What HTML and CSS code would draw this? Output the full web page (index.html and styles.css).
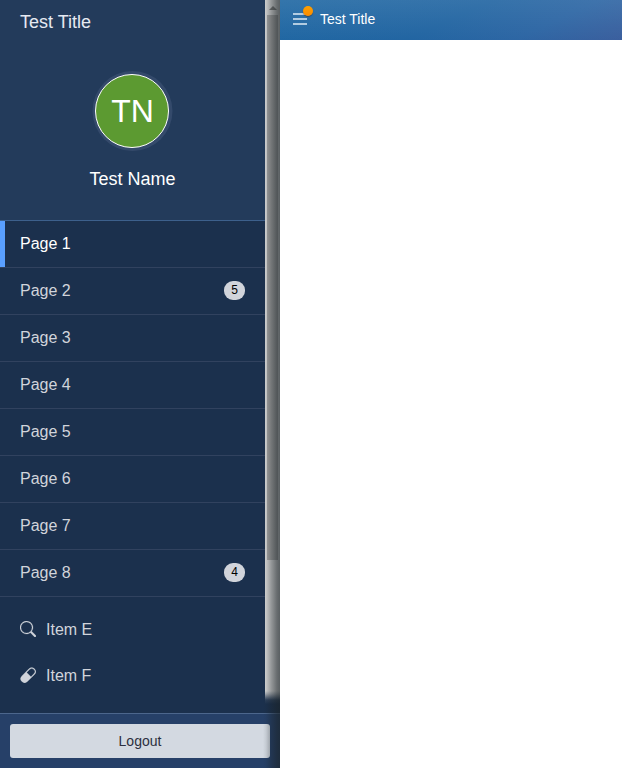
FILE: index.html
```html
<!DOCTYPE html>
<html lang="en">
<head>
<meta charset="utf-8">
<title>Test Title</title>
<link rel="stylesheet" href="styles.css">
</head>
<body>
<div class="app">
  <aside class="sidebar">
    <div class="scroll">
      <div class="content">
        <header class="profile">
          <div class="brand">Test Title</div>
          <div class="avatar">TN</div>
          <div class="name">Test Name</div>
        </header>
        <nav class="pages">
          <a class="page active">Page 1</a>
          <a class="page">Page 2<span class="badge">5</span></a>
          <a class="page">Page 3</a>
          <a class="page">Page 4</a>
          <a class="page">Page 5</a>
          <a class="page">Page 6</a>
          <a class="page">Page 7</a>
          <a class="page">Page 8<span class="badge">4</span></a>
        </nav>
        <div class="items">
          <a class="item"><svg viewBox="0 0 16 16" fill="currentColor"><path stroke="currentColor" stroke-width=".2" d="M11.742 10.344a6.5 6.5 0 1 0-1.397 1.398h-.001q.044.06.098.115l3.85 3.85a1 1 0 0 0 1.415-1.414l-3.85-3.85a1 1 0 0 0-.115-.1zM12 6.5a5.5 5.5 0 1 1-11 0 5.5 5.5 0 0 1 11 0"/></svg><span>Item E</span></a>
          <a class="item"><svg viewBox="0 0 16 16" fill="currentColor"><path stroke="currentColor" stroke-width=".2" d="M1.828 8.9 8.9 1.827a4 4 0 1 1 5.657 5.657l-7.07 7.071A4 4 0 1 1 1.827 8.9Zm9.128.771 2.893-2.893a3 3 0 1 0-4.243-4.242L6.713 5.429z"/></svg><span>Item F</span></a>
        </div>
      </div>
      <div class="track"><div class="arrow"></div><div class="thumb"></div></div>
    </div>
    <footer class="footer"><button class="logout">Logout</button></footer>
    <div class="shade"></div>
  </aside>
  <main class="main">
    <header class="topbar">
      <span class="menu"><svg viewBox="0 0 14 12"><path d="M0 1h14M0 6h14M0 11h14"/></svg><i class="dot"></i></span>
      <span>Test Title</span>
    </header>
  </main>
</div>
</body>
</html>
```
FILE: styles.css
```css
* { box-sizing: border-box; }
body { margin: 0; font-family: "Liberation Sans", Arial, sans-serif; background: #fff; }
.app { display: flex; width: 622px; height: 768px; overflow: hidden; }
.sidebar { position: relative; display: flex; flex-direction: column; width: 280px; background: #1b304d; overflow: hidden; }
.scroll { display: flex; height: 713px; }
.content { width: 265px; }
.profile { display: flex; flex-direction: column; align-items: center; height: 221px; background: #233b5b; border-bottom: 1px solid #3d608c; color: #fff; }
.brand { align-self: stretch; height: 44px; padding-left: 20px; line-height: 44px; font-size: 18px; color: #e6eaf2; }
.avatar { width: 74px; height: 74px; margin: 30px 1px 0 0; border: 1px solid #fff; border-radius: 50%; background: #5c9a31; box-shadow: .5px 0 0 3px #344a6b; font-size: 32px; line-height: 73px; text-align: center; text-indent: 1px; }
.name { margin-top: 20px; font-size: 18px; line-height: 22px; }
.page { display: flex; align-items: center; justify-content: space-between; height: 47px; padding: 0 20px; border-bottom: 1px solid #31425f; font-size: 16px; color: #d1d4db; }
.active { box-shadow: inset 5px 0 #599fff; color: #fff; }
.badge { width: 21px; height: 19px; margin-bottom: 2px; border-radius: 9px; background: #d1d4db; color: #000; font-size: 12px; line-height: 19px; text-align: center; }
.items { padding-top: 9px; }
.item { display: flex; align-items: center; gap: 10px; height: 46px; padding-left: 20px; font-size: 16px; color: #d1d4db; }
.item svg { width: 16px; height: 16px; }
.item span { padding-top: 2px; }
.track { width: 15px; background: #d4d4d4; }
.arrow { width: 0; height: 10px; margin-left: 4px; border: 4px solid transparent; border-top-width: 6px; border-bottom-color: #777; }
.thumb { width: 11px; height: 545px; margin: 5px 2px 0; background: #a3a3a3; }
.footer { height: 55px; padding: 10px; border-top: 1px solid #4c668c; background: #264068; }
.logout { display: block; width: 260px; height: 34px; padding: 0; border: 0; border-radius: 3px; background: #d3d9e1; color: #2b3040; font: 14px "Liberation Sans", Arial, sans-serif; }
.shade { position: absolute; top: 0; right: 0; width: 17px; height: 100%; background: linear-gradient(90deg, rgba(26,34,38,0), rgba(26,34,38,.08) 18%, rgba(26,34,38,.35) 50%, rgba(26,34,38,.58) 82%, rgba(26,34,38,.65)); }
.scroll::after { content: ""; position: absolute; top: 691px; left: 265px; width: 15px; height: 22px; background: linear-gradient(rgba(27,48,77,0), rgba(27,48,77,.25) 3px, rgba(27,48,77,.9) 9px, #1b304d 13px); }
.main { flex: 1; background: #fff; }
.topbar { display: flex; align-items: center; height: 40px; padding-left: 13px; gap: 13px; color: #fff; font-size: 14px; line-height: 38px; background: linear-gradient(rgba(255,255,255,.09), rgba(255,255,255,0)), linear-gradient(155deg, #2068a3, #2265a2 50%, #2d66a4 75%, #3b5f9e); }
.topbar > span { height: 40px; }
.menu { position: relative; width: 14px; }
.menu svg { display: block; width: 14px; height: 12px; margin-top: 13px; stroke: #e0ecf5; stroke-width: 1.7; }
.dot { position: absolute; top: 6px; left: 10px; width: 10px; height: 10px; border-radius: 50%; background: linear-gradient(#ffa000, #f98b00); box-shadow: 0 1px 1px rgba(60,50,40,.6); }
```
